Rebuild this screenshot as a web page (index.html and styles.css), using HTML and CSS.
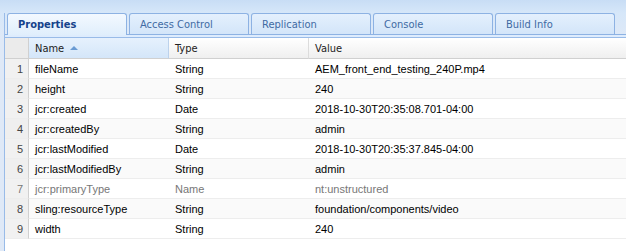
FILE: index.html
```html
<!DOCTYPE html>
<html lang="en">
<head>
    <meta charset="UTF-8">
    <title>Properties</title>
    <link rel="stylesheet" href="styles.css">
</head>
<body>
    <div class="panel">
        <div class="tab-bar">
            <ul class="tabs">
                <li class="tab active">Properties</li>
                <li class="tab">Access Control</li>
                <li class="tab">Replication</li>
                <li class="tab">Console</li>
                <li class="tab">Build Info</li>
            </ul>
            <div class="tab-spacer"></div>
        </div>

        <div class="grid">
            <table class="props">
                <thead>
                    <tr>
                        <th class="num"></th>
                        <th class="col-name sorted">Name <span class="sort-asc"></span></th>
                        <th class="col-type">Type</th>
                        <th class="col-value">Value</th>
                    </tr>
                </thead>
                <tbody>
                    <tr><td class="num">1</td><td>fileName</td><td>String</td><td>AEM_front_end_testing_240P.mp4</td></tr>
                    <tr class="alt"><td class="num">2</td><td>height</td><td>String</td><td>240</td></tr>
                    <tr><td class="num">3</td><td>jcr:created</td><td>Date</td><td>2018-10-30T20:35:08.701-04:00</td></tr>
                    <tr class="alt"><td class="num">4</td><td>jcr:createdBy</td><td>String</td><td>admin</td></tr>
                    <tr><td class="num">5</td><td>jcr:lastModified</td><td>Date</td><td>2018-10-30T20:35:37.845-04:00</td></tr>
                    <tr class="alt"><td class="num">6</td><td>jcr:lastModifiedBy</td><td>String</td><td>admin</td></tr>
                    <!-- protected property, shown greyed out -->
                    <tr class="protected"><td class="num">7</td><td>jcr:primaryType</td><td>Name</td><td>nt:unstructured</td></tr>
                    <tr class="alt"><td class="num">8</td><td>sling:resourceType</td><td>String</td><td>foundation/components/video</td></tr>
                    <tr><td class="num">9</td><td>width</td><td>String</td><td>240</td></tr>
                </tbody>
            </table>
        </div>
    </div>
</body>
</html>
```

FILE: styles.css
```css
body {
    margin: 0;
    height: 251px;
    overflow: hidden;
    font-family: 'Liberation Sans', Arial, sans-serif;
    font-size: 11px;
    background: linear-gradient(#c8ddf5, #d6e7f9 13px, #dfe9f7 38px);
}
.panel {
    margin-left: 4px;
    padding-top: 13px;
}
.tab-bar {
    border-left: 1px solid #99bbe8;
}
.tabs {
    display: flex;
    margin: 0;
    padding: 0 0 0 2px;
    list-style: none;
    height: 21px;
    border-bottom: 1px solid #8db2e3;
}
.tab {
    box-sizing: border-box;
    width: 120px;
    height: 21px;
    margin-right: 2px;
    padding: 4px 0 0 10px;
    font-family: 'DejaVu Sans Condensed', 'DejaVu Sans', sans-serif;
    font-size: 11px;
    color: #416aa3;
    border: 1px solid #8db2e3;
    border-bottom: none;
    border-radius: 3px 3px 0 0;
    background: linear-gradient(#e4f0fd, #d3e5f9);
}
.tab.active {
    height: 22px;
    font-weight: bold;
    color: #15428b;
    background: linear-gradient(#f3f9ff, #e0eefc);
}
.tab-spacer {
    height: 2px;
    background-color: #deecfd;
    border-bottom: 1px solid #99bbe8;
}
.grid {
    height: 213px;
    overflow: hidden;
    background-color: white;
    border-left: 1px solid #99bbe8;
}
.props {
    width: 621px;
    table-layout: fixed;
    border-collapse: separate;
    border-spacing: 0;
}
.props th,
.props td {
    box-sizing: border-box;
    padding: 0 0 0 6px;
    text-align: left;
    white-space: nowrap;
    overflow: hidden;
}
.props th {
    height: 21px;
    font-family: 'DejaVu Sans Condensed', 'DejaVu Sans', sans-serif;
    font-weight: normal;
    font-size: 11px;
    color: #222;
    background: linear-gradient(#ffffff, #efefef);
    border-bottom: 1px solid #d0d0d0;
    border-right: 1px solid #dcdcdc;
}
.props th.num {
    width: 24px;
    background: #ebebeb;
    border-right: 1px solid #d0d0d0;
}
.props th.col-name { width: 140px; }
.props th.col-type { width: 140px; }
.props th.col-value { border-right: none; }
.props th.sorted {
    background: linear-gradient(#e6f1fd, #d4e6f9);
    border-right-color: #bcd2ec;
}
.sort-asc {
    display: inline-block;
    margin-left: 3px;
    vertical-align: 2px;
    border-left: 4px solid transparent;
    border-right: 4px solid transparent;
    border-bottom: 4px solid #6a9bd3;
}
.props td {
    height: 20px;
    color: #000;
    border-bottom: 1px solid #ededed;
}
.props tr.alt td {
    background-color: #fafafa;
}
.props tr.protected td {
    color: #777;
}
.props td.num {
    padding: 0 5px 0 0;
    text-align: right;
    color: #444;
    background-color: #f1f1f1;
    border-right: 1px solid #d0d0d0;
}
.props tr.alt td.num {
    background-color: #efefef;
}
```
